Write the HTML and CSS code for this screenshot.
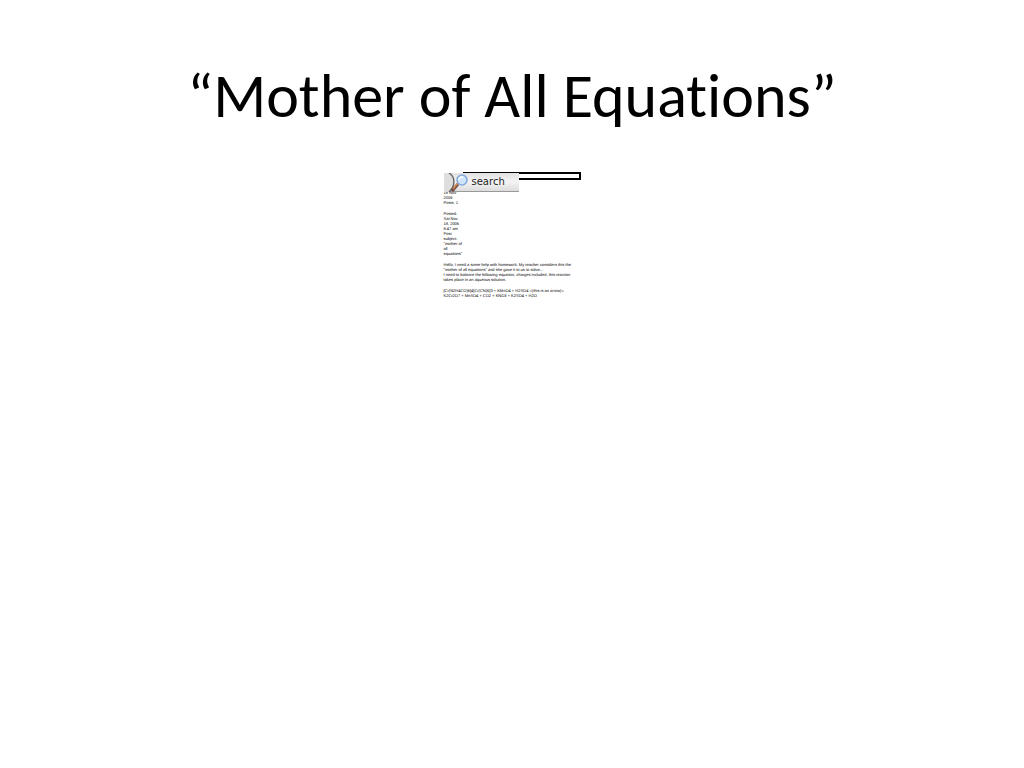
FILE: index.html
```html
<!DOCTYPE html>
<html lang="en">
<head>
    <meta charset="UTF-8">
    <meta name="viewport" content="width=device-width, initial-scale=1.0">
    <title>Mother of All Equations</title>
    <link rel="stylesheet" href="styles.css">
</head>
<body>

    <h1>“Mother of All Equations”</h1>

    <main class="post">
        <form class="search">
            <input type="text" class="search-box" aria-label="Search">
            <button type="button" class="search-btn">
                <svg class="search-icon" viewBox="0 0 28 19" aria-hidden="true">
                    <path d="M0 0H5C12 3 12 15 5 19H0Z" fill="#dedede"/>
                    <path d="M5 0C12 4 11 14 5 19" fill="none" stroke="#666" stroke-width="1.4"/>
                    <path d="M14 11L8 18" stroke="#6b4a48" stroke-width="3"/>
                    <path d="M14 10L9 16" stroke="#e08a4c" stroke-width="1.4"/>
                    <circle cx="18" cy="7" r="5" fill="#cfe6fa" stroke="#86a9dc" stroke-width="1.6"/>
                    <path d="M15 7C15 5 17 4 19 4" fill="none" stroke="#fff" stroke-width="1.4"/>
                </svg>
                <span>search</span>
            </button>
        </form>

        <div class="details">
            <p>18 Nov<br>2006<br>Posts: 1</p>
            <p>Posted:<br>Sat Nov<br>18, 2006<br>8:47 am<br>Post<br>subject:<br>"mother of<br>all<br>equations"</p>
        </div>

        <div class="message">
            <p>Hello, I need a some help with homework. My teacher considers this the<br>"mother of all equations" and she gave it to us to solve...<br>I need to balance the following equation, charges included, this reaction<br>takes place in an aqueous solution.</p>
            <p>[Cr(N2H4CO)6]4[Cr(CN)6]3 + KMnO4 + H2SO4 =(this is an arrow)=<br>K2Cr2O7 + MnSO4 + CO2 + KNO3 + K2SO4 + H2O</p>
        </div>
    </main>

</body>
</html>
```
FILE: styles.css
```css
body {
    margin: 0;
    background-color: white;
    color: black;
    font-family: "Liberation Sans", Arial, sans-serif;
}
h1 {
    margin: 60px 0 40px;
    font-family: Carlito, Calibri, Lato, sans-serif;
    font-size: 62px;
    font-weight: normal;
    font-variant-ligatures: none;
    line-height: 72px;
    text-align: center;
}
.post {
    width: 137px;
    margin: 0 auto;
    font-size: 4px;
    line-height: 5px;
    text-rendering: geometricPrecision;
}
.search {
    position: relative;
    height: 18px;
}
.search-box {
    display: block;
    box-sizing: border-box;
    width: 118px;
    height: 8px;
    margin-left: auto;
    padding: 0;
    border: 2px solid black;
    background: white;
}
/* the button lies over the left end of the box */
.search-btn {
    position: absolute;
    top: 1px;
    left: 0;
    display: flex;
    align-items: center;
    width: 75px;
    height: 19px;
    padding: 0;
    border: none;
    border-bottom: 1px solid #999;
    background: linear-gradient(#e2e2e2, #f4f4f4 50%, #dcdcdc);
    color: #222;
    font-family: "DejaVu Sans", sans-serif;
    font-size: 10px;
    line-height: 12px;
    cursor: pointer;
}
.search-icon {
    width: 28px;
    height: 19px;
}
.details {
    width: 24px;
}
.post p {
    margin: 0 0 6px;
    white-space: nowrap;
}
```
